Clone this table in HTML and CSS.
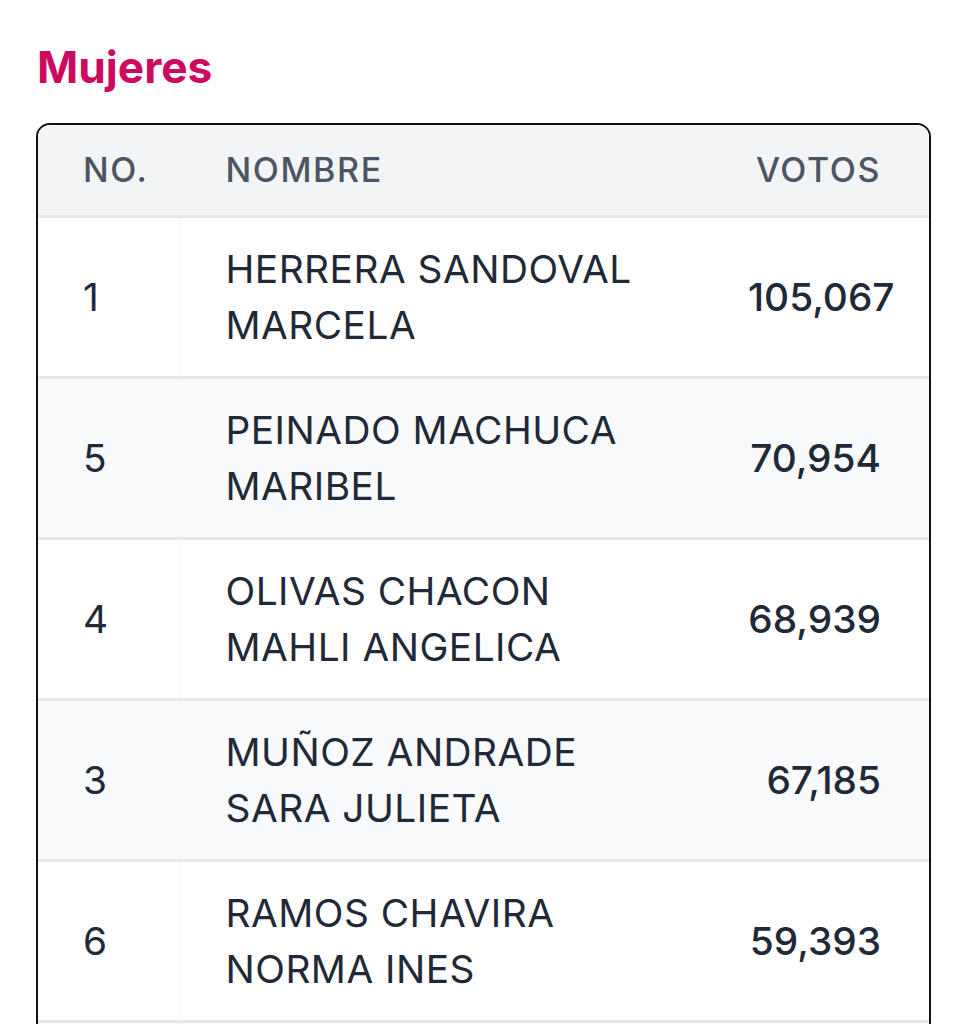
FILE: index.html
```html
<!DOCTYPE html>
<html lang="es">
<head>
<meta charset="utf-8">
<title>Mujeres</title>
<link rel="stylesheet" href="styles.css">
</head>
<body>
<main class="page">
  <h2 class="title">Mujeres</h2>
  <div class="table-wrap">
    <table class="results">
      <colgroup>
        <col class="c-no">
        <col class="c-name">
        <col class="c-votes">
      </colgroup>
      <thead>
        <tr>
          <th class="no">No.</th>
          <th class="name">Nombre</th>
          <th class="votes">Votos</th>
        </tr>
      </thead>
      <tbody>
        <tr>
          <td class="no">1</td>
          <td class="name">HERRERA SANDOVAL MARCELA</td>
          <td class="votes">105,067</td>
        </tr>
        <tr>
          <td class="no">5</td>
          <td class="name">PEINADO MACHUCA MARIBEL</td>
          <td class="votes">70,954</td>
        </tr>
        <tr>
          <td class="no">4</td>
          <td class="name">OLIVAS CHACON MAHLI ANGELICA</td>
          <td class="votes">68,939</td>
        </tr>
        <tr>
          <td class="no">3</td>
          <td class="name">MUÑOZ ANDRADE SARA JULIETA</td>
          <td class="votes">67,185</td>
        </tr>
        <tr>
          <td class="no">6</td>
          <td class="name">RAMOS CHAVIRA NORMA INES</td>
          <td class="votes">59,393</td>
        </tr>
        <tr class="empty">
          <td class="no"></td>
          <td class="name"></td>
          <td class="votes"></td>
        </tr>
      </tbody>
    </table>
  </div>
</main>
</body>
</html>
```
FILE: styles.css
```css
html, body {
  margin: 0;
  padding: 0;
  background: #ffffff;
}

body {
  font-family: Inter, "Noto Sans", "Liberation Sans", sans-serif;
  color: #1f2937;
}

.page {
  padding: 35px 37px 0 36px;
}

.title {
  margin: 0;
  font-size: 44.3px;
  line-height: 64px;
  font-weight: 700;
  color: #cc0a5f;
  padding-left: 1px;
}

.table-wrap {
  margin-top: 24px;
  border: 2px solid #111111;
  border-radius: 14px;
  overflow: hidden;
}

.results {
  width: 100%;
  border-collapse: collapse;
  table-layout: fixed;
}

.c-no { width: 142px; }
.c-votes { width: 230px; }

.results th {
  background: #f3f4f6;
  color: #4b5563;
  font-size: 34px;
  font-weight: 500;
  letter-spacing: 1.6px;
  text-transform: uppercase;
  line-height: 44px;
  padding: 23px 0;
  text-align: left;
}

.results td {
  font-size: 38.8px;
  letter-spacing: 0.5px;
  line-height: 56px;
  padding: 23px 0;
  border-top: 3px solid #e5e7eb;
  vertical-align: middle;
  color: #1f2937;
}

.results tr.empty td {
  height: 112px;
}

.results tbody tr:nth-child(even) td {
  background: #f9fafb;
}

.results .no {
  padding-left: 45px;
  border-right: 1px solid #f5f6f7;
}

.results .name {
  padding-left: 45px;
  padding-right: 30px;
}

.results .votes {
  text-align: right;
  white-space: nowrap;
  padding-left: 49px;
  padding-right: 48px;
}

.results td.votes {
  font-weight: 500;
  letter-spacing: 0;
}
```
